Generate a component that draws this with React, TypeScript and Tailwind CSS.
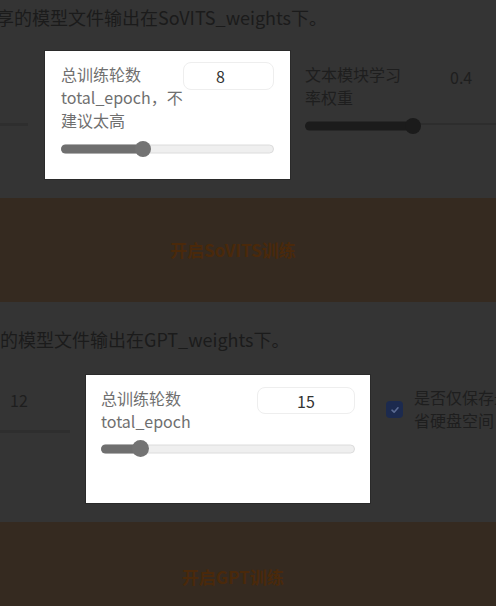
import React from "react";

const font = "font-['Noto_Sans_CJK_SC','Noto_Sans',sans-serif]";

function LightSlider({ pct, thumb }: { pct: number; thumb: number }) {
  return (
    <div className="relative" style={{ height: thumb }}>
      <div className="absolute left-0 right-0 top-1/2 -translate-y-1/2 h-[9px] rounded-full bg-[#efefef] border border-[#dcdcdc]" />
      <div
        className="absolute left-0 top-1/2 -translate-y-1/2 h-[9px] rounded-full bg-[#6f6f6f]"
        style={{ width: `${pct}%` }}
      />
      <div
        className="absolute top-0 rounded-full bg-[#737373]"
        style={{ width: thumb, height: thumb, left: `calc(${pct}% - ${thumb / 2}px)` }}
      />
    </div>
  );
}

export default function App() {
  return (
    <div className={`w-[496px] h-[606px] overflow-hidden bg-[#343434] ${font}`}>
      <p className="h-[34px] leading-[34px] text-[18px] text-[#1b1b1b] whitespace-nowrap -ml-[4px]">
        享的模型文件输出在SoVITS_weights下。
      </p>

      {/* Row 1 */}
      <div className="mt-[17px] flex items-start">
        <div className="w-[45px] shrink-0 pt-[72px]">
          <div className="h-[3px] w-[28px] bg-[#2e2e2e]" />
        </div>
        <div className="w-[245px] h-[128px] shrink-0 bg-white px-[16px] pt-[11px] shadow-[0_0_0_1px_#2a2a2a]">
          <div className="flex items-start justify-between">
            <div className="mt-[1px] text-[16px] leading-[23px] text-[#6f6f6f] whitespace-nowrap">
              总训练轮数
              <br />
              total_epoch，不
              <br />
              建议太高
            </div>
            <div className="w-[91px] h-[28px] rounded-[8px] border border-[#eeeeee] flex items-center justify-center pr-[16px] text-[16px] text-[#333333]">
              8
            </div>
          </div>
          <div className="mt-[9px]">
            <LightSlider pct={38.5} thumb={16} />
          </div>
        </div>
        <div className="flex-1 pl-[15px] pt-[12px]">
          <div className="flex items-start">
            <div className="text-[16px] leading-[23px] text-[#1e1e1e] whitespace-nowrap">
              文本模块学习
              <br />
              率权重
            </div>
            <div className="ml-[49px] mt-[3px] text-[16px] leading-[23px] text-[#1e1e1e]">0.4</div>
          </div>
          <div className="relative mt-[9px] h-[16px]">
            <div className="absolute left-[107px] right-0 top-[5px] h-[2px] bg-[#2d2d2d]" />
            <div className="absolute left-0 w-[110px] top-1/2 -translate-y-1/2 h-[9px] rounded-full bg-[#1b1b1b]" />
            <div className="absolute left-[100px] top-0 w-[16px] h-[16px] rounded-full bg-[#1b1b1b]" />
          </div>
        </div>
      </div>

      {/* Button 1 */}
      <div className="mt-[19px] h-[104px] bg-[#352a20] flex items-center justify-center pr-[30px]">
        <span className="text-[17px] font-bold text-[#4a290b]">开启SoVITS训练</span>
      </div>

      <p className="mt-[20px] h-[34px] leading-[34px] text-[18px] text-[#1b1b1b] whitespace-nowrap">
        的模型文件输出在GPT_weights下。
      </p>

      {/* Row 2 */}
      <div className="mt-[19px] flex items-start">
        <div className="w-[86px] shrink-0 pt-[14px]">
          <div className="pl-[10px] text-[16px] leading-[23px] text-[#1e1e1e]">12</div>
          <div className="mt-[18px] h-[3px] w-[70px] bg-[#2e2e2e]" />
        </div>
        <div className="w-[284px] h-[128px] shrink-0 bg-white px-[15px] pt-[12px] shadow-[0_0_0_1px_#2a2a2a]">
          <div className="flex items-start justify-between">
            <div className="text-[16px] leading-[23px] text-[#6f6f6f] whitespace-nowrap">
              总训练轮数
              <br />
              total_epoch
            </div>
            <div className="w-[98px] h-[27px] rounded-[8px] border border-[#eeeeee] flex items-center justify-center text-[16px] text-[#333333]">
              15
            </div>
          </div>
          <div className="mt-[7px]">
            <LightSlider pct={15.7} thumb={17} />
          </div>
        </div>
        <div className="flex-1 pl-[16px] pt-[11px] flex items-start whitespace-nowrap">
          <div className="mt-[15px] w-[17px] h-[17px] shrink-0 rounded-[4px] bg-[#1c2a4e] flex items-center justify-center">
            <svg width="10" height="10" viewBox="0 0 10 10" fill="none">
              <path d="M2 5.2 L4.1 7.2 L8 2.8" stroke="#5b6b92" strokeWidth="1.6" strokeLinecap="round" strokeLinejoin="round" />
            </svg>
          </div>
          <div className="ml-[11px] text-[16px] leading-[23px] text-[#1e1e1e]">
            是否仅保存最新的ckpt文件以节
            <br />
            省硬盘空间
          </div>
        </div>
      </div>

      {/* Button 2 */}
      <div className="mt-[19px] h-[110px] bg-[#352a20] flex items-center justify-center pr-[30px]">
        <span className="text-[17px] font-bold text-[#4a290b]">开启GPT训练</span>
      </div>
    </div>
  );
}
